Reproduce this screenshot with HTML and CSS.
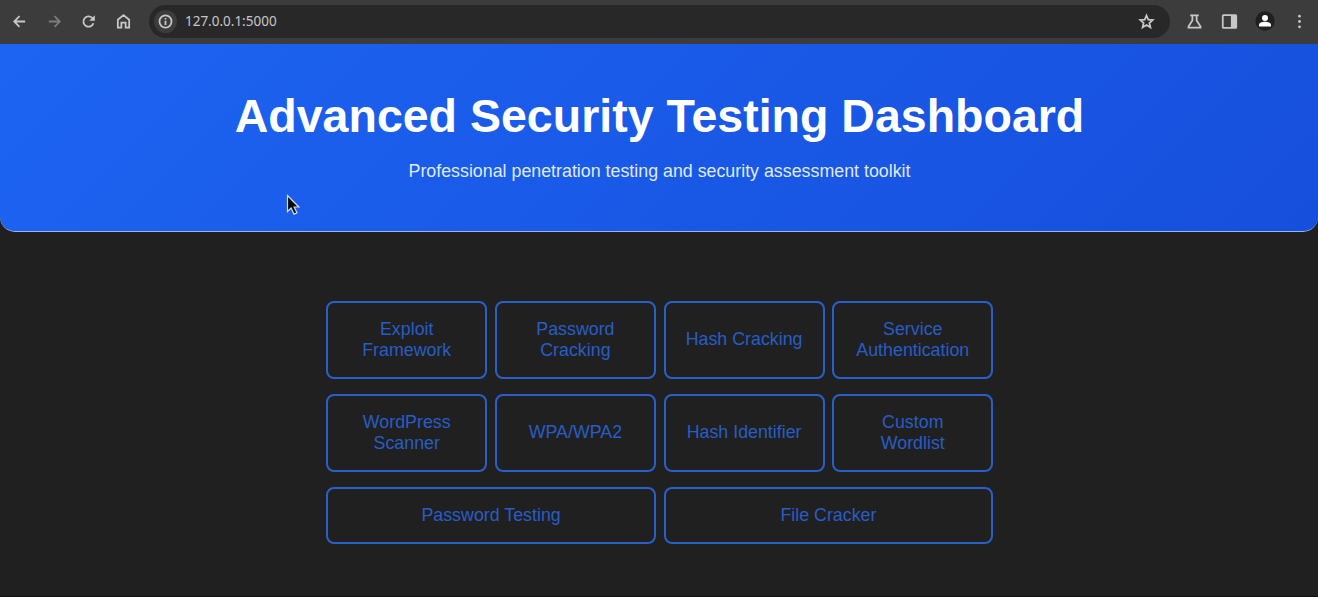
FILE: index.html
```html
<!DOCTYPE html>
<html lang="en">
<head>
<meta charset="utf-8">
<title>Advanced Security Testing Dashboard</title>
<link rel="stylesheet" href="styles.css">
</head>
<body>
<div class="toolbar">
  <div class="nav">
    <svg class="icon" viewBox="0 0 24 24"><path d="M20 12H5M12 4.500 4.500 12l7.500 7.500"/></svg>
    <svg class="icon dim" viewBox="0 0 24 24"><path d="M4 12h15M12 4.500l7.500 7.500-7.500 7.500"/></svg>
    <svg class="icon" viewBox="0 0 24 24"><path d="M19 14.500A7.300 7.300 0 1 1 17.200 6.800L19 8.500"/><path class="solid" d="M21 3v8h-8z"/></svg>
    <svg class="icon" viewBox="0 0 24 24"><path d="M4 20.500V9.500L12 3l8 6.500v11h-5v-7H9v7z"/></svg>
  </div>
  <div class="address">
    <span class="info"><svg class="icon" viewBox="0 0 24 24"><circle cx="12" cy="12" r="8.500"/><path d="M12 11v6M12 7v2"/></svg></span>
    <span class="url">127.0.0.1:5000</span>
    <svg class="icon star" viewBox="0 0 24 24"><path d="M12 3.500l2.500 5.800 6.300.6-4.700 4.200 1.400 6.200-5.500-3.300-5.500 3.300 1.400-6.200-4.700-4.200 6.300-.6z"/></svg>
  </div>
  <div class="actions">
    <svg class="icon" viewBox="0 0 24 24"><path d="M6 3.500h12M9 4v6.500L3.500 19v1.500h17V19L15 10.500V4"/></svg>
    <svg class="icon panel" viewBox="0 0 24 24"><rect x="2.500" y="3" width="19" height="18" rx="1"/><path class="solid" d="M14 3h7.500v18H14z"/></svg>
    <svg class="avatar" viewBox="0 0 20 20"><circle class="disc" cx="10" cy="10" r="9.700"/><circle cx="10" cy="7" r="3"/><path d="M4 15.500v-1.400c0-2.200 3-3.300 6-3.300s6 1.100 6 3.300v1.400z"/></svg>
    <svg class="icon dots" viewBox="0 0 24 24"><circle cx="12" cy="4.500" r="2"/><circle cx="12" cy="12" r="2"/><circle cx="12" cy="19.500" r="2"/></svg>
  </div>
</div>
<header class="hero">
  <h1 class="title">Advanced Security Testing Dashboard</h1>
  <p class="subtitle">Professional penetration testing and security assessment toolkit</p>
  <svg class="cursor" viewBox="0 0 14 22"><path d="M1.500 1.500v16l3.600-3.400 2.900 6 3-1.400-2.900-5.700h4.700z"/></svg>
</header>
<main class="tools">
  <button class="tool">Exploit Framework</button>
  <button class="tool">Password Cracking</button>
  <button class="tool">Hash Cracking</button>
  <button class="tool">Service Authentication</button>
  <button class="tool">WordPress Scanner</button>
  <button class="tool">WPA/WPA2</button>
  <button class="tool">Hash Identifier</button>
  <button class="tool">Custom Wordlist</button>
  <button class="tool wide">Password Testing</button>
  <button class="tool wide">File Cracker</button>
</main>
</body>
</html>
```

FILE: styles.css
```css
* { box-sizing: border-box; }
body {
  margin: 0;
  height: 597px;
  overflow: hidden;
  background: #202020;
  border-bottom: 1px solid #111;
  font-family: "Liberation Sans", Arial, sans-serif;
}
.toolbar {
  display: flex;
  align-items: center;
  height: 44px;
  padding: 0 10px 2px 11px;
  background: #3c3c3c;
}
.nav { display: flex; gap: 17.700px; width: 138px; }
.icon {
  flex: none;
  width: 17px;
  height: 17px;
  fill: none;
  stroke: #c7c7c7;
  stroke-width: 2.500;
}
.dim { stroke: #7d7d7d; }
.address {
  display: flex;
  align-items: center;
  width: 1021px;
  height: 33px;
  padding: 0 15px 0 5px;
  border-radius: 17px;
  background: #282828;
}
.info {
  display: grid;
  place-items: center;
  width: 23px;
  height: 23px;
  border-radius: 50%;
  background: #3c3c3c;
}
.url {
  flex: 1;
  margin-left: 8px;
  color: #c7c7c7;
  font: 13.500px "Noto Sans", sans-serif;
}
.actions {
  display: flex;
  align-items: center;
  gap: 18px;
  margin-left: 16.500px;
}
.solid, .dots { fill: #c7c7c7; stroke: none; }
.avatar { width: 20px; height: 20px; margin: 0 -1.500px; fill: #fff; }
.disc { fill: #202020; }
.hero {
  position: relative;
  height: 188px;
  padding-top: 44px;
  border-bottom: 1.500px solid #9db4e4;
  border-radius: 0 0 15px 15px;
  background: linear-gradient(135deg, #1d64f2, #164fdc);
  text-align: center;
}
.title {
  margin: 0 0 0 1px;
  color: #fff;
  font-size: 46.530px;
  line-height: 56px;
}
.subtitle {
  margin: 16px 0 0 1px;
  color: #dfeafd;
  font-size: 17.820px;
  line-height: 22px;
}
.cursor {
  position: absolute;
  left: 286px;
  top: 150px;
  width: 14px;
  height: 22px;
  fill: #080808;
  stroke: #d5ddec;
  stroke-width: 1.200;
}
.tools {
  display: grid;
  grid-template-columns: repeat(4, 161px);
  grid-template-rows: 78px 78px 57px;
  justify-content: center;
  gap: 15px 7.700px;
  padding: 69px 0 0 1.500px;
}
.tool {
  padding: 0 16px;
  border: 2px solid #2860ca;
  border-radius: 8px;
  background: transparent;
  color: #285dc5;
  font: 17.820px/21.500px "Liberation Sans", Arial, sans-serif;
}
.wide { grid-column: span 2; }
```
